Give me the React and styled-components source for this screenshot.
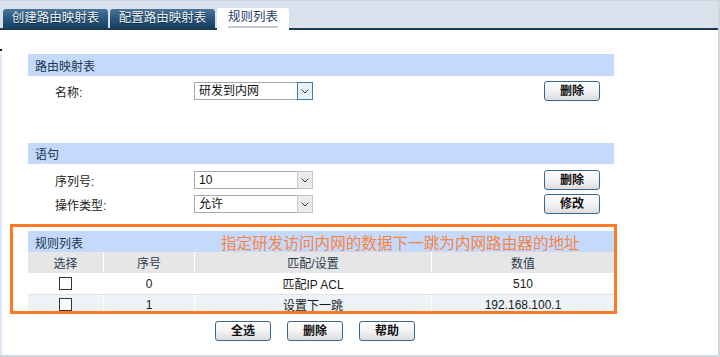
import React from "react";
import styled, { createGlobalStyle } from "styled-components";

const GlobalStyle = createGlobalStyle`
  html, body {
    margin: 0;
    padding: 0;
    background: #fff;
  }
  body {
    font-family: "Liberation Sans", "Noto Sans CJK SC", sans-serif;
    font-size: 12px;
    color: #222;
  }
`;

const Frame = styled.div`
  position: relative;
  width: 720px;
  height: 357px;
  box-sizing: border-box;
  border-top: 1px solid #cfd4da;
  border-right: 2px solid #d2d5d9;
  border-bottom: 2px solid #d2d5d9;
  overflow: hidden;
`;

const TabBar = styled.div`
  display: flex;
  align-items: flex-end;
  gap: 2px;
  height: 27px;
  padding-left: 3px;
  background: #d9e1ec;
  border-bottom: 2px solid #1d3a55;
`;

const Tab = styled.div`
  box-sizing: border-box;
  width: ${({ $w }) => $w}px;
  height: ${({ $active }) => ($active ? "22px" : "19px")};
  margin-bottom: ${({ $active }) => ($active ? "-2px" : "0")};
  display: flex;
  align-items: center;
  justify-content: center;
  font-size: 12.5px;
  border-radius: 3px 3px 0 0;
  color: ${({ $active }) => ($active ? "#1f3e66" : "#eef3f8")};
  background: ${({ $active }) =>
    $active ? "#fff" : "linear-gradient(#4b7598 0%, #2c5a80 45%, #16405f 100%)"};
  text-shadow: ${({ $active }) => ($active ? "none" : "0 1px 0 #0d2a40")};

  span {
    border-bottom: ${({ $active }) => ($active ? "2px solid #c4ccd6" : "none")};
    line-height: 15px;
    padding-bottom: 1px;
  }
`;

const Dot = styled.div`
  position: absolute;
  left: 0;
  top: 48px;
  width: 2px;
  height: 2px;
  background: #111;
`;

const Content = styled.div`
  padding-left: 26px;
  border-left: 2px solid #dbe6f5;
  height: 100%;
  box-sizing: border-box;
`;

const SectionHead = styled.div`
  width: 586px;
  height: ${({ $h }) => $h}px;
  margin-top: ${({ $top }) => $top}px;
  background: #c4d9fb;
  display: flex;
  align-items: center;
  padding-left: 7px;
  box-sizing: border-box;
  color: #1d3550;
  font-size: 12px;
`;

const FormRows = styled.div`
  margin-top: ${({ $top }) => $top}px;
`;

const FormRow = styled.div`
  display: grid;
  grid-template-columns: 139px 350px 56px;
  align-items: center;
  height: 24px;
  padding-left: 27px;
`;

const Label = styled.div`
  color: #222;
  font-size: 12px;
`;

const Select = styled.div`
  width: 119px;
  height: 18px;
  box-sizing: border-box;
  border: 1px solid #a3a9b1;
  display: flex;
  align-items: stretch;
  background: #fff;
`;

const SelectText = styled.div`
  flex: 1;
  padding-left: 4px;
  line-height: 16px;
  font-size: 12px;
  color: #111;
`;

const Arrow = styled.div`
  width: 16px;
  box-sizing: border-box;
  margin: -1px -1px -1px 0;
  border: 1px solid ${({ $focus }) => ($focus ? "#3a7bb5" : "#c3c8ce")};
  background: ${({ $focus }) => ($focus ? "#e8f2fb" : "#ececec")};
  display: flex;
  align-items: center;
  justify-content: center;
`;

const Button = styled.button`
  width: 56px;
  height: 20px;
  padding: 0;
  border: 1px solid #3a6690;
  border-radius: 3px;
  background: linear-gradient(#ffffff 0%, #f3f3f3 50%, #dcdcdc 100%);
  font-family: "Liberation Sans", "Noto Sans CJK SC", sans-serif;
  font-size: 12px;
  font-weight: bold;
  color: #111;
  line-height: 1;
`;

const TableWrap = styled.div`
  position: relative;
  width: 586px;
  margin-top: 15px;
`;

const Annotation = styled.div`
  position: absolute;
  left: -18px;
  top: -7px;
  width: 607px;
  height: 90px;
  box-sizing: border-box;
  border: 3px solid #ff7a22;
  pointer-events: none;
`;

const TableTitle = styled.div`
  display: grid;
  grid-template-columns: 193px auto;
  align-items: center;
  height: 21px;
  background: #c4d9fb;
  color: #1d3550;
  font-size: 12px;

  span:first-child {
    padding-left: 7px;
  }
`;

const Note = styled.span`
  color: #f7843f;
  font-size: 15.6px;
  white-space: nowrap;
`;

const Row = styled.div`
  display: grid;
  grid-template-columns: 75px 90px 236px 182px;
  column-gap: 1px;
  height: ${({ $h }) => $h}px;
  background: #fff;
  border-top: ${({ $line }) => ($line ? "1px solid #dfe3ea" : "none")};
  box-sizing: border-box;
`;

const Cell = styled.div`
  display: flex;
  align-items: center;
  justify-content: center;
  background: ${({ $bg }) => $bg};
  color: ${({ $head }) => ($head ? "#2b3a4d" : "#1a1a1a")};
  font-size: 12px;
`;

const Check = styled.span`
  width: 11px;
  height: 11px;
  border: 1px solid #333;
  background: #fff;
`;

const Actions = styled.div`
  display: flex;
  gap: 16px;
  margin-top: 7px;
  padding-left: 187px;
`;

const Chevron = () => (
  <svg width="8" height="5" viewBox="0 0 8 5">
    <path d="M0.5 0.5 L4 4 L7.5 0.5" fill="none" stroke="#333" strokeWidth="1" />
  </svg>
);

const Dropdown = ({ value, focus }) => (
  <Select>
    <SelectText>{value}</SelectText>
    <Arrow $focus={focus}>
      <Chevron />
    </Arrow>
  </Select>
);

const rules = [
  { id: "0", match: "匹配IP ACL", value: "510", bg: "#fff" },
  { id: "1", match: "设置下一跳", value: "192.168.100.1", bg: "#eef2f9" },
];

export default function App() {
  return (
    <Frame>
      <GlobalStyle />
      <TabBar>
        <Tab $w={105}>
          <span>创建路由映射表</span>
        </Tab>
        <Tab $w={105}>
          <span>配置路由映射表</span>
        </Tab>
        <Tab $w={72} $active>
          <span>规则列表</span>
        </Tab>
      </TabBar>
      <Dot />
      <Content>
        <SectionHead $top={24} $h={22}>
          路由映射表
        </SectionHead>
        <FormRows $top={3}>
          <FormRow>
            <Label>名称:</Label>
            <Dropdown value="研发到内网" focus />
            <Button>删除</Button>
          </FormRow>
        </FormRows>

        <SectionHead $top={40} $h={21}>
          语句
        </SectionHead>
        <FormRows $top={4}>
          <FormRow>
            <Label>序列号:</Label>
            <Dropdown value="10" />
            <Button>删除</Button>
          </FormRow>
          <FormRow>
            <Label>操作类型:</Label>
            <Dropdown value="允许" />
            <Button>修改</Button>
          </FormRow>
        </FormRows>

        <TableWrap>
          <TableTitle>
            <span>规则列表</span>
            <Note>指定研发访问内网的数据下一跳为内网路由器的地址</Note>
          </TableTitle>
          <Row $h={21}>
            <Cell $head $bg="#e6e6e6">选择</Cell>
            <Cell $head $bg="#e6e6e6">序号</Cell>
            <Cell $head $bg="#e6e6e6">匹配/设置</Cell>
            <Cell $head $bg="#e6e6e6">数值</Cell>
          </Row>
          {rules.map((r, i) => (
            <Row key={r.id} $h={i === 0 ? 21 : 20} $line={i > 0}>
              <Cell $bg={r.bg}>
                <Check />
              </Cell>
              <Cell $bg={r.bg}>{r.id}</Cell>
              <Cell $bg={r.bg}>{r.match}</Cell>
              <Cell $bg={r.bg}>{r.value}</Cell>
            </Row>
          ))}
          <Annotation />
        </TableWrap>

        <Actions>
          <Button>全选</Button>
          <Button>删除</Button>
          <Button>帮助</Button>
        </Actions>
      </Content>
    </Frame>
  );
}
